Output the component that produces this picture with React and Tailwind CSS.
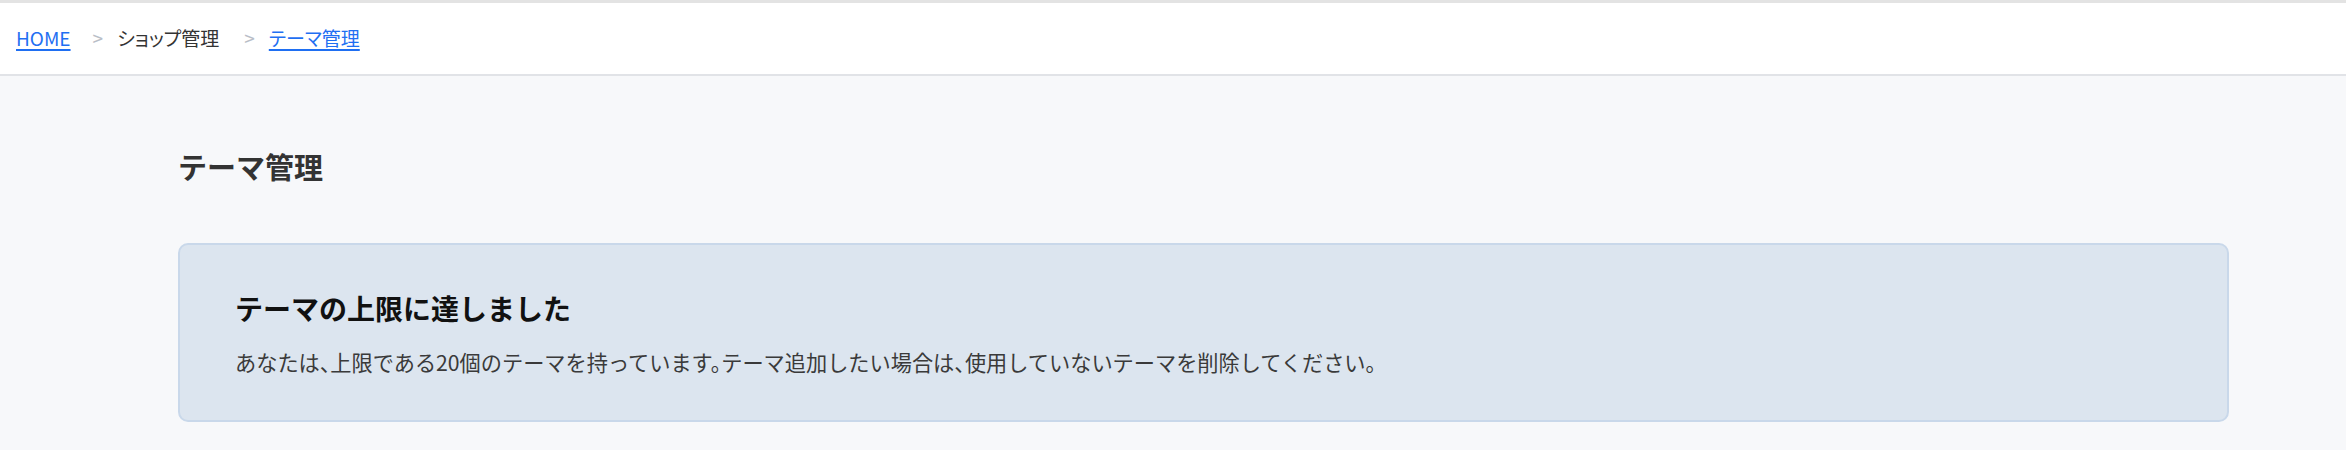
import React from 'react';

const crumbs = [
  { name: 'HOME', link: true },
  { name: 'ショップ管理', link: false },
  { name: 'テーマ管理', link: true },
];

const App = () => {
  return (
    <div
      className="min-h-[450px] bg-[#f7f8fa]"
      style={{ fontFamily: '"Noto Sans CJK JP", "Noto Sans", sans-serif' }}
    >
      {/* Breadcrumb bar */}
      <header className="h-[76px] bg-white border-t-[3px] border-t-[#e3e3e3] border-b-2 border-b-[#e1e3e7]">
        <nav className="flex items-center h-full pl-[16px] text-[19px] leading-none pb-[2px] [font-feature-settings:'palt']">
          {crumbs.map((c, i) => (
            <React.Fragment key={c.name}>
              {i > 0 && <span className="pl-[22px] pr-[14px] text-[#b9bec7]">&gt;</span>}
              {c.link ? (
                <a href="#" className="text-[#1f6ff2] underline decoration-2 underline-offset-[3px]">
                  {c.name}
                </a>
              ) : (
                <span className="text-[#333] pr-[3px]">{c.name}</span>
              )}
            </React.Fragment>
          ))}
        </nav>
      </header>

      <main className="pl-[178px] pr-[117px] pt-[72px]">
        <h1 className="text-[29px] font-bold leading-[36px] text-[#333]">テーマ管理</h1>

        {/* Limit notice */}
        <div className="mt-[59px] rounded-[10px] border-2 border-[#c9d8ea] bg-[#dce5ef] pl-[55px] pt-[46px] pb-[43px]">
          <h2 className="text-[28px] font-bold leading-[34px] text-[#111]">テーマの上限に達しました</h2>
          <p className="mt-[22px] text-[21.2px] leading-[30px] text-[#3a3a3a] [font-feature-settings:'halt']">
            あなたは、上限である20個のテーマを持っています。テーマ追加したい場合は、使用していないテーマを削除してください。
          </p>
        </div>
      </main>
    </div>
  );
};

export default App;
